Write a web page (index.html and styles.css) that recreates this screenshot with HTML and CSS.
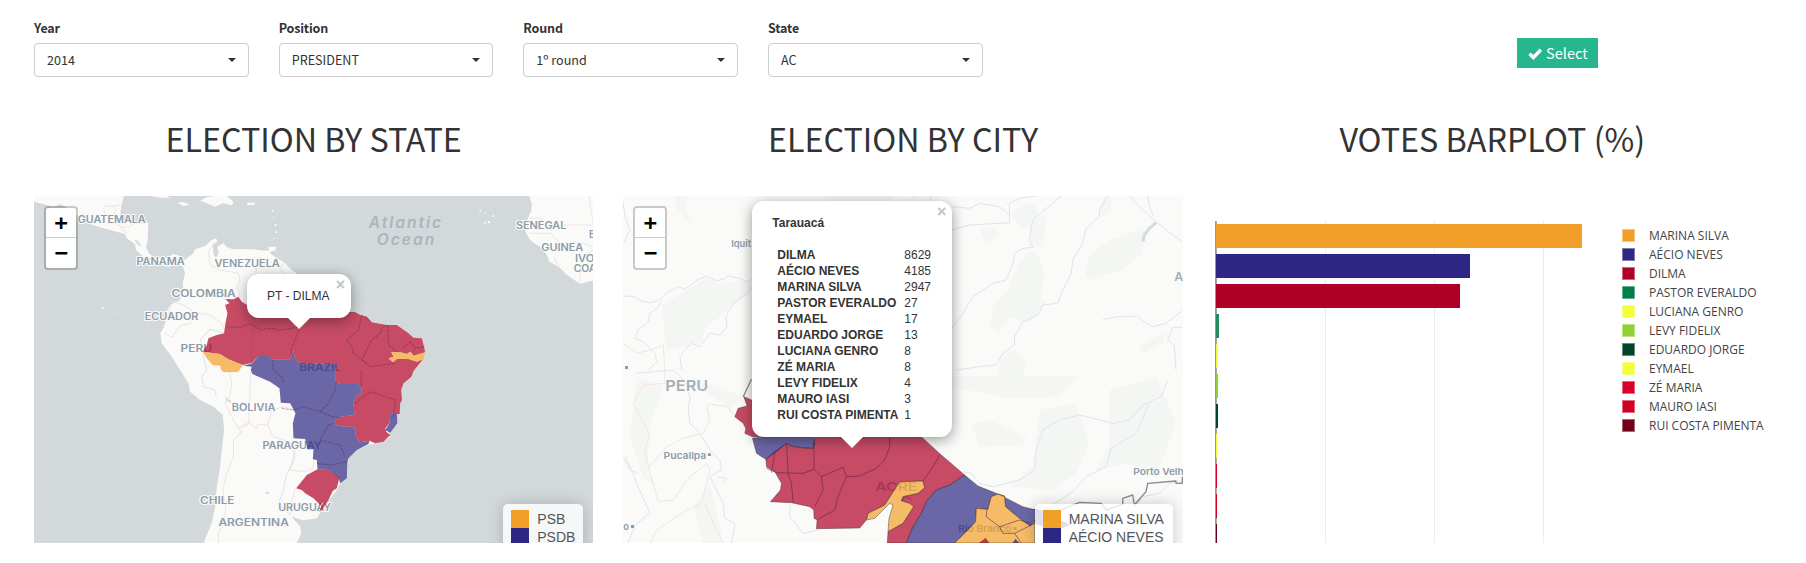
FILE: index.html
```html
<!DOCTYPE html>
<html lang="en">
<head>
<meta charset="utf-8">
<title>Election results</title>
<link rel="stylesheet" href="styles.css">
</head>
<body>
<form class="filters">
  <div class="field"><span class="label">Year</span><div class="select"><span>2014</span><i class="caret"></i></div></div>
  <div class="field"><span class="label">Position</span><div class="select"><span>PRESIDENT</span><i class="caret"></i></div></div>
  <div class="field"><span class="label">Round</span><div class="select"><span>1º round</span><i class="caret"></i></div></div>
  <div class="field"><span class="label">State</span><div class="select"><span>AC</span><i class="caret"></i></div></div>
  <button class="submit" type="button"><svg width="15" height="13" viewBox="0 0 15 13"><path d="M1.5 6.7 5.6 10.6 13.4 2.6" fill="none" stroke="#fff" stroke-width="3.6"/></svg><span>Select</span></button>
</form>
<main class="panels">
  <section class="panel">
    <h1>ELECTION BY STATE</h1>
    <div class="map water">
      <svg class="canvas" viewBox="42 18 1677 1041" preserveAspectRatio="none">
        <g class="land">
          <path d="M42 18H312L305 40 300 75 315 92 350 95 385 98 383 150 378 172 388 192 405 203 440 205 460 192 480 198 493 210 520 190 525 178 555 168 575 150 588 145 592 155 578 165 580 185 583 200 590 200 595 188 592 170 610 160 620 172 640 178 700 178 735 182 765 178 748 188 770 205 790 215 815 240 832 252 900 270 960 300 990 367 1020 375 1050 395 1100 405 1130 405 1165 430 1180 443 1205 445 1215 490 1205 515 1180 543 1150 580 1143 600 1140 640 1133 672 1130 700 1105 730 1108 742 1090 755 1045 765 1010 780 985 805 980 865 960 880 950 900 930 925 905 960 890 985 850 991 825 983 815 978 822 990 840 1008 843 1030 830 1059H552L556 1045 575 1000 585 950 590 890 600 830 606 770 612 720 608 675 580 650 540 630 510 605 505 580 480 540 455 500 425 460 421 430 432 410 438 390 435 375 450 345 480 330 490 300 488 280 495 250 488 230 465 213 450 230 430 228 420 212 395 205 370 200 348 180 345 163 320 145 315 132 290 125 240 112 190 95 155 60 120 43 100 50 42 35Z"/>
          <path d="M1527 18 1535 45 1532 65 1522 85 1524 105 1515 125 1530 150 1545 162 1560 170 1580 195 1588 215 1620 235 1640 255 1680 282 1700 275 1719 272V18Z"/>
          <path d="M472 38 490 36 508 44 490 48ZM540 32 560 22 585 18H620L640 35 636 46 608 40 585 50 560 40ZM680 38 705 38 703 44 682 46ZM395 18H440L452 25 410 22ZM744 170 768 170 766 182 748 182Z"/>
        </g>
        <g class="islets"><circle cx="757" cy="62" r="3"/><circle cx="760" cy="82" r="2"/><circle cx="766" cy="105" r="3"/><circle cx="768" cy="126" r="3"/><circle cx="762" cy="145" r="2"/><circle cx="249" cy="355" r="3"/><circle cx="283" cy="370" r="2"/><circle cx="1380" cy="62" r="3"/><circle cx="1394" cy="69" r="2"/><circle cx="1406" cy="96" r="4"/><circle cx="1393" cy="99" r="3"/><circle cx="1419" cy="78" r="3"/></g>
        <path class="lake" d="M582 178 592 178 596 190 588 200 580 192ZM615 620 632 632 634 640 620 633ZM342 150 352 152 364 167 357 167ZM735 906H747V911H737Z"/>
        <path class="frontier" d="M250 50 300 45M285 45V95L300 110 320 130M250 52 254 70 275 95M300 112 325 110 345 100 380 98M490 205 492 235M585 155 565 185 570 225 600 240 655 250 660 275 650 290 660 320M790 217 780 240 800 260M453 335 490 345 530 370 570 375 605 400 615 425M452 345 440 390M432 428 455 442 480 408 510 400 530 370M628 545 635 580 628 620 615 640 640 690 655 715 665 725 640 750 640 800 620 850 608 900 617 950 612 1000 595 1030V1059M655 715 685 698 710 205M655 715 690 700 708 715 715 702 742 705 755 660 790 650 820 658M742 705 760 740 830 765M808 760 825 800 810 840 855 845 878 835 882 808M825 895 815 940 810 975M1527 85 1560 85 1590 105 1719 105M1706 18 1719 105M1530 130 1590 130 1620 160 1665 155 1719 170M1600 200 1618 235M1680 282 1678 250 1690 200 1719 180" />
        <path class="stream" d="M612 430 570 418 540 450 550 500 560 540 545 560 550 590 585 600 588 620M830 765 815 820 797 860 790 900 775 940 810 975"/>
        <g class="place">
          <text x="173" y="98" textLength="204" lengthAdjust="spacingAndGlyphs">GUATEMALA</text><text x="349" y="224" textLength="145" lengthAdjust="spacingAndGlyphs">PANAMA</text><text x="583" y="230" textLength="196" lengthAdjust="spacingAndGlyphs">VENEZUELA</text><text x="454" y="320" textLength="193" lengthAdjust="spacingAndGlyphs">COLOMBIA</text><text x="374" y="391" textLength="161" lengthAdjust="spacingAndGlyphs">ECUADOR</text><text x="481" y="485" textLength="95" lengthAdjust="spacingAndGlyphs">PERU</text><text x="838" y="543" textLength="125" lengthAdjust="spacingAndGlyphs">BRAZIL</text><text x="635" y="663" textLength="131" lengthAdjust="spacingAndGlyphs">BOLIVIA</text><text x="727" y="777" textLength="177" lengthAdjust="spacingAndGlyphs">PARAGUAY</text><text x="540" y="941" textLength="103" lengthAdjust="spacingAndGlyphs">CHILE</text><text x="774" y="963" textLength="159" lengthAdjust="spacingAndGlyphs">URUGUAY</text><text x="595" y="1007" textLength="211" lengthAdjust="spacingAndGlyphs">ARGENTINA</text><text x="1487" y="118" textLength="151" lengthAdjust="spacingAndGlyphs">SENEGAL</text><text x="1563" y="184" textLength="126" lengthAdjust="spacingAndGlyphs">GUINEA</text><text x="1706" y="144">B</text><text x="1664" y="216" textLength="58" lengthAdjust="spacingAndGlyphs">IVO</text><text x="1660" y="246" textLength="68" lengthAdjust="spacingAndGlyphs">COA</text>
        </g>
        <g class="ocean"><text x="1046" y="113" textLength="217">Atlantic</text><text x="1070" y="165" textLength="172">Ocean</text></g>
        <g class="region">
          <path class="pt" d="M616 327 640 328 655 320 665 335 681 345 800 300 985 365 1005 367 1020 375 1040 380 1055 397 1100 405 1130 405 1165 430 1180 443 1205 445 1210 465 1215 487 1180 497 1170 485 1160 492 1140 487 1113 487 1120 500 1105 505 1118 517 1130 507 1165 507 1190 515 1209 508 1180 543 1173 560 1150 580 1143 600 1145 630 1140 640 1138 672 1110 672 1108 700 1095 715 1098 725 1110 735 1090 755 1065 760 1048 752 1018 757 1008 740 1002 710 975 710 942 705 945 693 960 680 1003 675 1000 640 1010 615 1025 613 1023 590 1015 582 960 582 945 575 945 540 952 521 845 520 825 510 820 480 812 508 755 508 745 498 715 498 697 518 668 525 625 508 600 492 548 485 560 465 565 445 590 435 612 430 616 400 622 370 615 345 628 340Z"/>
          <path class="psdb" d="M670 527 697 520 715 498 745 498 755 508 812 508 820 480 825 510 845 520 952 521 945 540 945 575 960 582 1015 582 1023 590 1025 613 1010 615 1000 640 1003 675 960 680 945 693 942 705 975 710 1002 710 1008 740 1018 757 1048 752 1045 762 1010 780 985 805 982 815 980 865 960 880 955 862 925 840 892 838 890 810 878 808 880 778 862 778 855 747 820 745 818 700 826 670 810 640 782 638 778 595 750 575 697 552 692 540 695 530ZM1110 672H1131V700L1110 728 1095 720 1108 700Z"/>
          <path class="psb" d="M548 485 600 492 625 508 668 525 655 545 625 547 610 546 603 540 600 527 578 526 560 505ZM1105 505 1120 500 1113 487 1140 487 1160 492 1170 485 1180 497 1215 487 1210 508 1190 515 1165 507 1130 507 1118 517Z"/>
          <path class="pt" d="M828 895 860 855 892 838 925 840 958 862 950 895 938 902 925 930 905 960 897 965 910 935 900 945 880 925 855 910 845 900Z"/>
        </g>
        <path class="divide" d="M620 410 660 412 690 400 720 420 750 415 780 420 835 412M838 418 825 450 812 480 818 500M1025 375 1015 420 990 440 980 450 995 470 1000 490 1025 510 1040 480 1055 450 1080 430 1085 415 1100 405M1103 405 1105 465 1130 485M1025 510 1050 530 1120 520M1150 475 1170 455 1185 475 1213 470M758 510V540L785 560 790 580M785 655 820 660 850 650 900 665 925 640 945 600 948 575M900 665 935 680 962 682M1003 640 1050 605 1125 630 1120 680M1023 590 1023 540M900 750 925 705 945 700M900 750 960 765 975 800M890 820 930 825 980 815"/>
      </svg>
      <div class="zoom"><span>+</span><span>−</span></div>
      <div class="popup popup-state"><span>PT - DILMA</span><b class="close">×</b></div>
      <div class="legend legend-state"><div><i class="sw orange"></i>PSB</div><div><i class="sw indigo"></i>PSDB</div></div>
    </div>
  </section>
  <section class="panel">
    <h1>ELECTION BY CITY</h1>
    <div class="map plain">
      <svg class="canvas" viewBox="39 18 1680 1041" preserveAspectRatio="none">
        <path class="wood" d="M190 18H230L228 60 245 97 230 90 200 55ZM155 345 250 290 290 262 330 280 425 270V310L360 350 330 380 290 410 270 460 170 482ZM645 18H850V33H645ZM1205 70 1250 40 1285 45 1280 100 1240 115 1215 90ZM1110 115 1160 110 1165 140 1130 160ZM1260 90 1310 75 1300 170 1260 165ZM1230 215 1260 185 1290 200 1305 250 1295 320 1310 340 1260 400 1200 380 1170 430 1140 410 1150 350 1190 310ZM1440 200 1500 150 1570 125 1605 110 1600 190 1540 240 1440 270 1428 250ZM1470 50 1490 18H1505L1505 60 1480 80ZM1590 470 1640 440 1670 430 1660 460 1600 490ZM1026 560H1400L1350 620 1200 625 1026 590ZM1180 500 1220 478 1250 520 1240 560H1160ZM1085 700 1140 690 1250 740 1240 765 1110 770ZM1290 660 1400 640 1440 760 1400 850 1330 900 1200 890 1270 830 1280 740ZM1500 600 1640 560 1700 700 1640 860 1560 820 1460 840 1500 760ZM80 560 160 590 120 700 110 850 150 900 100 860 60 740ZM250 950 300 880 340 1059H280ZM240 560 400 620 360 660 270 590Z"/>
        <path class="stream" d="M39 318 75 320 90 332 120 338 150 330 170 308 205 290 225 298 265 268 292 258 320 272 340 268 355 258 390 265 410 275 426 268M155 335 140 355 120 370 115 395 85 420 75 445 100 455 135 490 140 515 115 540M426 292 410 310 390 325 370 340 348 380 352 410 330 435 300 430 270 470 245 460 220 485 210 500 215 540M39 35 45 80 60 120 40 160M75 550 130 545 190 540 210 560 225 570 240 620 235 660 240 700 270 730 300 780 330 810 335 840 300 860 310 880 340 940 345 985 375 1000 365 1059M1026 50 1080 55 1110 40 1170 50 1200 75 1200 40 1230 25 1280 18M1026 120 1080 105 1200 98 1200 75M1355 18 1270 90 1260 150 1270 172 1240 175 1215 190 1210 220 1190 270 1150 280 1090 320 1060 370 1026 415M1495 18 1470 60 1470 80 1430 115 1420 160 1390 210 1385 250 1360 300 1345 340 1300 345 1285 375 1240 395 1215 440 1215 465 1180 490 1160 525 1110 530 1040 540M1480 388 1530 380 1585 378 1610 400 1630 410 1670 400 1719 362M1560 18 1600 60 1640 95 1670 120 1719 155M1615 18 1620 50 1632 80M1719 412H1690L1675 450 1695 465 1700 540M1675 570 1655 620 1600 645 1560 690 1510 700 1410 675 1350 690 1300 720 1280 780 1275 840 1230 870 1150 890 1110 880 1085 850 1060 845M1620 640 1580 730 1505 775 1490 830 1430 860 1390 905 1330 945M1719 875 1680 880 1650 910 1600 920 1565 970 1560 1059M320 860 350 865 340 880M45 800 65 840 80 880 120 970 75 1005 55 1059M540 945 540 980 580 1030 625 1020"/>
        <path class="channel" d="M1601 155 1605 135 1620 115 1640 98"/>
        <path class="frontier" d="M39 460 80 490 120 480 160 465 165 540M165 540V580L100 585 70 640 120 735 105 780 120 850 145 935 190 930 230 870 290 820 300 840 275 940 230 960 140 1020 120 1059M110 840 170 770 220 745 280 730 300 690 290 650 300 642 350 650 378 678M39 800 60 840 85 850M285 940 310 1000 340 1059M962 18 965 33M900 33 915 18"/>
        <path class="border" d="M400 620 425 568M1270 958 1340 965 1410 937 1475 940 1490 960 1540 943 1540 925 1570 915 1575 945 1610 905 1615 880 1700 873V880H1719V860"/>
        <g class="town"><text x="364" y="171">Iquit</text><text x="161" y="806" textLength="128" lengthAdjust="spacingAndGlyphs">Pucallpa</text><text x="40" y="1021">o</text><text x="1572" y="855" textLength="151" lengthAdjust="spacingAndGlyphs">Porto Velh</text><text x="1046" y="1026" textLength="160" lengthAdjust="spacingAndGlyphs">Rio Branco</text></g>
        <g class="country"><text x="166" y="602" textLength="129" lengthAdjust="spacingAndGlyphs" font-size="45">PERU</text><text x="1695" y="274" font-size="37">A</text><text x="797" y="902" textLength="126" lengthAdjust="spacingAndGlyphs" font-size="36">ACRE</text></g>
        <path class="dot" d="M294 790H303V798H294ZM63 1005H72V1014H63ZM45 528H54V537H45ZM1212 1011H1221V1020H1212Z"/>
        <g class="region outlined">
          <path class="pt" d="M402 620 425 630 700 650 938 743 995 795 1065 855 1020 885 980 900 950 935 935 970 910 1010 890 1059H833L835 1025 880 1000 912 950 900 940 875 932 880 920 925 910 945 893 940 873 870 875 825 945 775 970 770 990 750 1014 620 1016 622 990 613 985 612 960 600 950 545 938 482 935 512 900 515 880 495 845 470 830 468 808 490 788 530 760 545 768 575 773 610 775 615 740H428L405 730 408 715 400 700 375 680 385 655 412 648Z"/>
          <path class="psdb" d="M428 745 470 740H612L615 760 610 775 575 773 545 768 530 760 500 785 468 808 440 790ZM1065 855 1105 888 1165 912 1145 920 1135 958 1100 955 1098 995 1070 1025 1035 1059H890L910 1010 935 970 950 935 980 900 1020 885ZM1165 912 1240 950 1270 958 1300 965 1380 1005 1340 1020 1275 1000 1262 1008 1230 985 1188 950 1185 918Z"/>
          <path class="psb" d="M770 990 775 970 825 945 870 875 940 873 945 893 925 910 880 920 875 932 900 940 912 950 880 1000 835 1025 838 985 850 945 840 940 795 985ZM1035 1059 1070 1025 1098 995 1100 955 1135 958 1145 920 1165 912 1185 918 1188 950 1230 985 1262 1008 1275 990V1059Z"/>
          <path class="pt" d="M1110 1059 1128 1045 1138 1059Z"/><path class="psdb" d="M1210 1059 1218 1048 1228 1059Z"/>
        </g>
        <path class="divide city" d="M470 835 500 848 580 850 613 838 612 760M613 838 635 860 700 832 710 860 750 858 800 835 825 810 840 770V742M635 860 640 900 615 950M710 860 685 920 675 960 625 988M530 760 535 850 545 880 550 938M940 873 970 830 990 795M1132 958 1130 980 1170 1010 1230 990 1262 1000M1170 1010 1180 1030 1215 1030 1275 1000M875 932 890 918 905 930M1215 1030 1235 1059M485 848 495 790"/>
      </svg>
      <div class="zoom"><span>+</span><span>−</span></div>
      <div class="popup popup-city">
        <strong>Tarauacá</strong><b class="close">×</b>
        <table>
          <tr><th>DILMA</th><td>8629</td></tr><tr><th>AÉCIO NEVES</th><td>4185</td></tr><tr><th>MARINA SILVA</th><td>2947</td></tr><tr><th>PASTOR EVERALDO</th><td>27</td></tr><tr><th>EYMAEL</th><td>17</td></tr><tr><th>EDUARDO JORGE</th><td>13</td></tr><tr><th>LUCIANA GENRO</th><td>8</td></tr><tr><th>ZÉ MARIA</th><td>8</td></tr><tr><th>LEVY FIDELIX</th><td>4</td></tr><tr><th>MAURO IASI</th><td>3</td></tr><tr><th>RUI COSTA PIMENTA</th><td>1</td></tr>
        </table>
      </div>
      <div class="legend legend-city"><div><i class="sw orange"></i>MARINA SILVA</div><div><i class="sw indigo"></i>AÉCIO NEVES</div></div>
    </div>
  </section>
  <section class="panel">
    <h1>VOTES BARPLOT (%)</h1>
    <div class="chart">
      <div class="plot">
        <i class="bar" style="width:366.5px;background:#f29f29"></i><i class="bar" style="width:254px;background:#2e2683"></i><i class="bar" style="width:244px;background:#b10026"></i><i class="bar" style="width:3px;background:#238b5e"></i><i class="bar" style="width:2px;background:#f2ff3a"></i><i class="bar" style="width:2px;background:#8fd134"></i><i class="bar" style="width:2px;background:#004529"></i><i class="bar" style="width:1px;background:#f2ff3a"></i><i class="bar" style="width:1px;background:#d9002c"></i><i class="bar" style="width:1px;background:#d00022"></i><i class="bar" style="width:1px;background:#67001a"></i>
      </div>
      <ul class="key">
        <li><i style="background:#f29f29"></i>MARINA SILVA</li><li><i style="background:#2e2683"></i>AÉCIO NEVES</li><li><i style="background:#b10026"></i>DILMA</li><li><i style="background:#007d49"></i>PASTOR EVERALDO</li><li><i style="background:#f2ff3a"></i>LUCIANA GENRO</li><li><i style="background:#8fd134"></i>LEVY FIDELIX</li><li><i style="background:#004529"></i>EDUARDO JORGE</li><li><i style="background:#f2ff3a"></i>EYMAEL</li><li><i style="background:#d9002c"></i>ZÉ MARIA</li><li><i style="background:#d00022"></i>MAURO IASI</li><li><i style="background:#730016"></i>RUI COSTA PIMENTA</li>
      </ul>
    </div>
  </section>
</main>
</body>
</html>
```
FILE: styles.css
```css
* { box-sizing: border-box; }
body { margin: 0; height: 563px; overflow: hidden; background: #fff; color: #333; font-family: "Noto Sans CJK SC", sans-serif; }
i { font-style: normal; display: block; }

.filters { display: flex; gap: 30px; height: 110px; padding: 18px 0 0 34px; }
.field { width: 214.67px; }
.label { display: block; height: 25px; line-height: 20px; font-size: 12.5px; font-weight: 700; letter-spacing: -.15px; }
.select { display: flex; align-items: center; justify-content: space-between; height: 34px; padding: 0 12px; border: 1px solid #ccc; border-radius: 4px; font-size: 12.6px; line-height: 20px; }
.caret { border: 4px solid transparent; border-top-color: #333; border-bottom: 0; }
.submit { display: flex; align-items: center; gap: 4px; width: 81px; height: 30px; margin: 20px 0 0 504px; padding: 0 10px 0 11px; border: 0; background: #26b78f; color: #fff; font: 14.5px/20px "Noto Sans CJK SC", sans-serif; }

.panels { display: grid; grid-template-columns: repeat(3, 1fr); gap: 30px; padding: 0 34px; }
h1 { height: 86px; margin: 0; padding-top: 7.5px; text-align: center; font-size: 32.3px; line-height: 40px; font-weight: 400; white-space: nowrap; }

.map { position: relative; height: 347px; overflow: hidden; font-family: "Liberation Sans", Arial, sans-serif; }
.water { background: #d3d9db; }
.plain { background: #fafaf8; }
.canvas { display: block; width: 100%; height: 100%; }
.land, .islets { fill: #fafaf8; }
.lake { fill: #d3d9db; }
.frontier, .stream, .channel, .border, .divide { fill: none; stroke-width: 3; stroke-linejoin: round; }
.frontier { stroke: #f2e3e4; }
.stream { stroke: #dee5e8; }
.channel { stroke: #d3dbdf; stroke-width: 9; }
.border { stroke: #8f8a8c; stroke-width: 4; }
.divide { stroke: #50204b; stroke-opacity: .4; stroke-dasharray: 9 3; }
.city { stroke-dasharray: none; stroke-opacity: .55; }
.wood { fill: #f4f6f4; }
.region path { fill-opacity: .7; }
.outlined path { stroke: #433; stroke-width: 2.5; stroke-opacity: .55; }
.pt { fill: #b10026; }
.psdb { fill: #2e2683; }
.psb { fill: #f29f29; }
.place, .town, .country, .ocean { font-family: Inter, "Open Sans", sans-serif; font-weight: 600; fill: #8c9ba8; stroke: #fafaf8; stroke-width: 6; stroke-linejoin: round; paint-order: stroke; }
.place { font-size: 29px; }
.town { font-size: 28px; }
.country { fill: #a3b0b9; }
.ocean { font-size: 47px; font-style: italic; fill: #a9b6bd; stroke: none; }
.dot { fill: #8c9ba8; }

.zoom { position: absolute; left: 10px; top: 10px; width: 34px; height: 64px; border: 2px solid rgba(0, 0, 0, .2); border-radius: 4px; background: #fff; background-clip: padding-box; color: #000; font: bold 22px/30px "DejaVu Sans Mono", monospace; text-align: center; }
.zoom span { display: block; height: 30px; }
.zoom span:first-child { border-bottom: 1px solid #ccc; }

.popup { position: absolute; border-radius: 12px; background: #fff; box-shadow: 0 3px 14px rgba(0, 0, 0, .4); font-size: 12px; line-height: 16px; }
.popup::after { content: ""; position: absolute; left: 50%; top: 100%; margin-left: -11px; border: 11px solid transparent; border-top-color: #fff; border-bottom: 0; }
.popup-state { left: 213px; top: 78px; width: 104px; height: 44px; padding: 14px 20px; white-space: nowrap; }
.popup-city { left: 129px; top: 5px; width: 200px; height: 236px; padding: 14px 20px; }
.close { position: absolute; top: 4px; right: 6px; color: #c3c3c3; font: bold 16px/14px "Liberation Sans", sans-serif; }
table { margin: 16px 0 0 4px; border-collapse: collapse; }
th, td { padding: 0; height: 16px; line-height: 16px; text-align: left; white-space: nowrap; }
th { width: 128px; padding-left: 1px; }

.legend { position: absolute; top: 308px; height: 60px; padding: 6px 8px; border-radius: 5px; background: rgba(255, 255, 255, .8); box-shadow: 0 0 15px rgba(0, 0, 0, .2); color: #555; font-size: 14px; line-height: 18px; white-space: nowrap; }
.legend-state { right: 10px; width: 80px; }
.legend-city { right: 10px; width: 138px; }
.legend div { display: flex; gap: 8px; }
.sw { width: 18px; height: 18px; }
.orange { background: #f29f29; }
.indigo { background: #2e2683; }

.chart { display: flex; height: 347px; padding: 25px 0 0 2.33px; overflow: hidden; }
.plot { display: flex; flex-direction: column; gap: 6px; width: 407px; height: 322px; padding-top: 3px; border-left: 1px solid #999; background: linear-gradient(#ededed, #ededed) 109px 0 / 1px 100% no-repeat, linear-gradient(#ededed, #ededed) 218px 0 / 1px 100% no-repeat, linear-gradient(#ededed, #ededed) 327px 0 / 1px 100% no-repeat, linear-gradient(#aaa, #aaa) 0 0 / 1px 100% no-repeat; }
.bar { flex: none; height: 24px; }
.key { margin: 0; padding: 4.5px 0 0; list-style: none; color: #444; font: 12px/19px "Open Sans", sans-serif; }
.key li { display: flex; align-items: center; gap: 14px; height: 19px; white-space: nowrap; }
.key i { width: 13px; height: 13px; border: 1px solid rgba(255, 255, 255, .4); }
```
